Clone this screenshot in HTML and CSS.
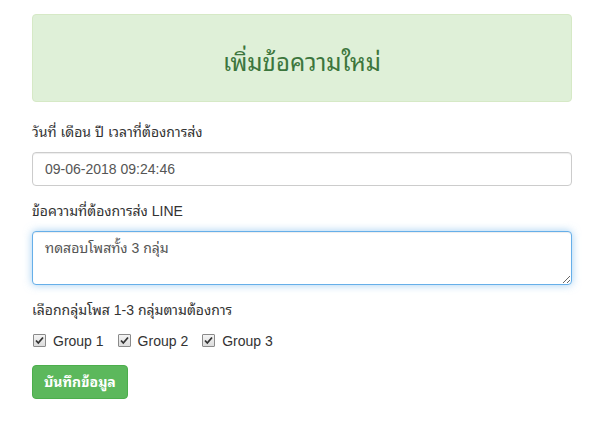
FILE: index.html
```html
<!DOCTYPE html>
<html lang="th">
<head>
<meta charset="utf-8">
<title>เพิ่มข้อความใหม่</title>
<link rel="stylesheet" href="styles.css">
</head>
<body>
<div class="container">
  <div class="alert">
    <h3 class="alert-title">เพิ่มข้อความใหม่</h3>
  </div>
  <form class="form">
    <div class="form-group">
      <label class="label">วันที่ เดือน ปี เวลาที่ต้องการส่ง</label>
      <input class="form-control" type="text" value="09-06-2018 09:24:46">
    </div>
    <div class="form-group">
      <label class="label">ข้อความที่ต้องการส่ง LINE</label>
      <textarea class="form-control textarea focused" rows="2">ทดสอบโพสทั้ง 3 กลุ่ม</textarea>
    </div>
    <div class="form-group">
      <label class="label">เลือกกลุ่มโพส 1-3 กลุ่มตามต้องการ</label>
      <div class="checks">
        <label class="check"><input class="check-input" type="checkbox" checked><span class="box"><svg width="13" height="13" viewBox="0 0 13 13"><path d="M3 6.5 L5.3 9 L10 3.5" fill="none" stroke="#333" stroke-width="1.8"/></svg></span>Group 1</label>
        <label class="check"><input class="check-input" type="checkbox" checked><span class="box"><svg width="13" height="13" viewBox="0 0 13 13"><path d="M3 6.5 L5.3 9 L10 3.5" fill="none" stroke="#333" stroke-width="1.8"/></svg></span>Group 2</label>
        <label class="check"><input class="check-input" type="checkbox" checked><span class="box"><svg width="13" height="13" viewBox="0 0 13 13"><path d="M3 6.5 L5.3 9 L10 3.5" fill="none" stroke="#333" stroke-width="1.8"/></svg></span>Group 3</label>
      </div>
    </div>
    <button type="button" class="btn">บันทึกข้อมูล</button>
  </form>
</div>
</body>
</html>
```
FILE: styles.css
```css
* { box-sizing: border-box; }
html, body { margin: 0; padding: 0; background: #fff; }
body {
  font-family: "Liberation Sans", Arial, Tahoma, "Noto Sans Thai Looped", Loma, Garuda, "Noto Sans Thai", "Noto Sans", sans-serif;
  font-size: 14px;
  line-height: 20px;
  color: #333;
}
.container {
  width: 540px;
  margin-left: 32px;
  padding-top: 14px;
}
.alert {
  background: #dff0d8;
  border: 1px solid #d6e9c6;
  border-radius: 4px;
  color: #3c763d;
  padding: 15px;
  margin-bottom: 20px;
  text-align: center;
}
.alert-title {
  margin: 20px 0 10px;
  font-size: 24px;
  font-weight: normal;
  line-height: 26.4px;
}
.form-group { margin-bottom: 15px; }
.label {
  display: block;
  margin-bottom: 10px;
  font-weight: normal;
}
.form-control {
  display: block;
  width: 100%;
  height: 34px;
  padding: 6px 12px;
  font: inherit;
  font-size: 14px;
  line-height: 20px;
  color: #555;
  background: #fff;
  border: 1px solid #ccc;
  border-radius: 4px;
  box-shadow: inset 0 1px 1px rgba(0,0,0,.075);
  margin: 0;
}
.textarea {
  height: 54px;
  resize: vertical;
}
.focused {
  border-color: #66afe9;
  outline: 0;
  box-shadow: inset 0 1px 1px rgba(0,0,0,.075), 0 0 8px rgba(102,175,233,.6);
}
.checks {
  display: flex;
  gap: 13px;
  height: 20px;
  align-items: center;
  padding-top: 1px;
}
.check {
  display: flex;
  align-items: center;
  gap: 7px;
  font-weight: normal;
  color: #333;
  cursor: pointer;
}
.check-input {
  position: absolute;
  opacity: 0;
  width: 0;
  height: 0;
  margin: 0;
}
.box {
  display: block;
  width: 13px;
  height: 13px;
  margin-left: 1px;
  border: 1px solid #8a8a8a;
  border-radius: 1px;
  background: linear-gradient(#f4f4f4, #dcdcdc);
  position: relative;
}
.box svg {
  position: absolute;
  left: -1px;
  top: -1px;
}
.btn {
  display: inline-block;
  height: 34px;
  padding: 6px 11px;
  font: inherit;
  font-size: 14px;
  font-weight: bold;
  line-height: 20px;
  color: #fff;
  background: #5cb85c;
  border: 1px solid #4cae4c;
  border-radius: 4px;
  cursor: pointer;
}
```
